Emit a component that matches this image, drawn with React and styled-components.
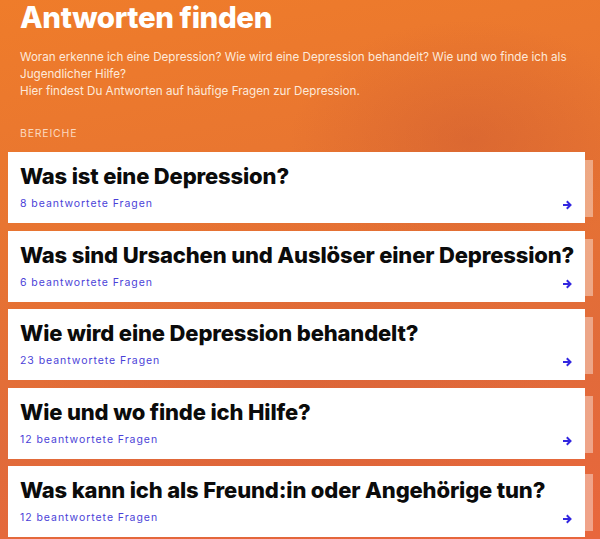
import React from "react";
import styled, { createGlobalStyle } from "styled-components";

const GlobalStyle = createGlobalStyle`
  html, body {
    margin: 0;
    padding: 0;
  }
  body {
    font-family: "Inter", "Noto Sans", sans-serif;
    overflow: hidden;
  }
`;

const Page = styled.div`
  width: 600px;
  height: 539px;
  overflow: hidden;
  background:
    radial-gradient(ellipse 180px 120px at 470px 140px, rgba(200, 85, 50, 0.4), transparent),
    radial-gradient(ellipse 260px 200px at 300px 400px, rgba(215, 95, 55, 0.5), transparent),
    linear-gradient(170deg, #ef7c2a 0%, #e87531 35%, #e16b3a 70%, #e8663c 100%);
  padding: 0 15px 0 8px;
  box-sizing: border-box;
`;

const Header = styled.header`
  padding: 0 12px;
  color: #fff;
`;

const Title = styled.h1`
  margin: 0;
  font-size: 29.5px;
  line-height: 34px;
  font-weight: 800;
  letter-spacing: -0.4px;
`;

const Intro = styled.p`
  margin: 14.5px 0 0;
  font-size: 11.65px;
  line-height: 17px;
  color: #fde9da;
  font-weight: 400;
`;

const Label = styled.div`
  margin-top: 27px;
  font-size: 10.5px;
  line-height: 13px;
  letter-spacing: 0.8px;
  color: #fbd8bf;
  text-transform: uppercase;
`;

const List = styled.div`
  margin-top: 12.5px;
  display: flex;
  flex-direction: column;
  gap: 7.5px;
`;

const Card = styled.a`
  position: relative;
  display: flex;
  flex-direction: column;
  height: 71px;
  box-sizing: border-box;
  padding: 10px 12px 0;
  background: #fff;
  text-decoration: none;

  &::after {
    content: "";
    position: absolute;
    top: 8px;
    bottom: 6px;
    right: -8px;
    width: 8px;
    background: rgba(255, 255, 255, 0.4);
  }
`;

const CardTitle = styled.h2`
  margin: 0;
  font-size: 22px;
  line-height: 28px;
  font-weight: 800;
  color: #0b0b0b;
  letter-spacing: -0.15px;
  white-space: nowrap;
`;

const Footer = styled.div`
  margin-top: 7px;
  display: flex;
  align-items: center;
  justify-content: space-between;
`;

const Count = styled.span`
  font-size: 10.5px;
  letter-spacing: 0.95px;
  color: #4b3fd8;
`;

const Arrow = styled.svg`
  width: 10px;
  height: 10px;
  margin-top: 3px;
  color: #3226e0;
`;

const areas = [
  { title: "Was ist eine Depression?", count: 8 },
  { title: "Was sind Ursachen und Auslöser einer Depression?", count: 6 },
  { title: "Wie wird eine Depression behandelt?", count: 23 },
  { title: "Wie und wo finde ich Hilfe?", count: 12 },
  { title: "Was kann ich als Freund:in oder Angehörige tun?", count: 12 },
];

export default function App() {
  return (
    <>
      <GlobalStyle />
      <Page>
        <Header>
          <Title>Antworten finden</Title>
          <Intro>
            Woran erkenne ich eine Depression? Wie wird eine Depression behandelt? Wie und wo finde ich als
            Jugendlicher Hilfe?
            <br />
            Hier findest Du Antworten auf häufige Fragen zur Depression.
          </Intro>
          <Label>Bereiche</Label>
        </Header>
        <List>
          {areas.map((a) => (
            <Card key={a.title} href="#">
              <CardTitle>{a.title}</CardTitle>
              <Footer>
                <Count>{a.count} beantwortete Fragen</Count>
                <Arrow viewBox="0 0 10 10">
                  <path d="M1 5h6M4.5 2l3 3-3 3" stroke="currentColor" strokeWidth="2" fill="none" strokeLinecap="square" />
                </Arrow>
              </Footer>
            </Card>
          ))}
        </List>
      </Page>
    </>
  );
}
